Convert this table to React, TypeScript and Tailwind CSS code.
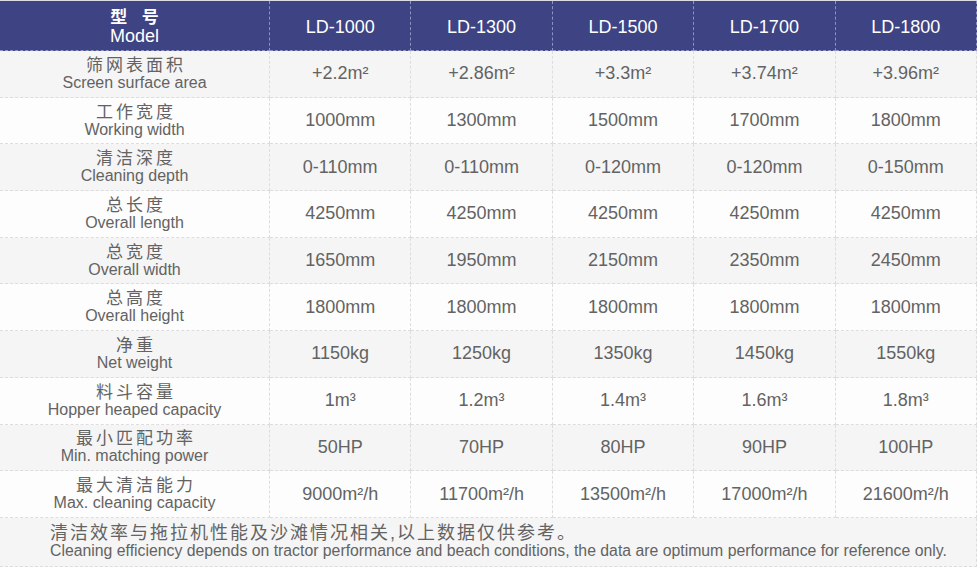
import React from "react";

const models = ["LD-1000", "LD-1300", "LD-1500", "LD-1700", "LD-1800"];

const rows: { zh: string; en: string; values: string[] }[] = [
  { zh: "筛网表面积", en: "Screen surface area", values: ["+2.2m²", "+2.86m²", "+3.3m²", "+3.74m²", "+3.96m²"] },
  { zh: "工作宽度", en: "Working width", values: ["1000mm", "1300mm", "1500mm", "1700mm", "1800mm"] },
  { zh: "清洁深度", en: "Cleaning depth", values: ["0-110mm", "0-110mm", "0-120mm", "0-120mm", "0-150mm"] },
  { zh: "总长度", en: "Overall length", values: ["4250mm", "4250mm", "4250mm", "4250mm", "4250mm"] },
  { zh: "总宽度", en: "Overall width", values: ["1650mm", "1950mm", "2150mm", "2350mm", "2450mm"] },
  { zh: "总高度", en: "Overall height", values: ["1800mm", "1800mm", "1800mm", "1800mm", "1800mm"] },
  { zh: "净重", en: "Net weight", values: ["1150kg", "1250kg", "1350kg", "1450kg", "1550kg"] },
  { zh: "料斗容量", en: "Hopper heaped capacity", values: ["1m³", "1.2m³", "1.4m³", "1.6m³", "1.8m³"] },
  { zh: "最小匹配功率", en: "Min. matching power", values: ["50HP", "70HP", "80HP", "90HP", "100HP"] },
  { zh: "最大清洁能力", en: "Max. cleaning capacity", values: ["9000m²/h", "11700m²/h", "13500m²/h", "17000m²/h", "21600m²/h"] },
];

export default function App() {
  return (
    <main
      className="w-[978px] h-[571px] bg-white overflow-hidden text-[#636363]"
      style={{ fontFamily: '"Liberation Sans", "Noto Sans CJK SC", sans-serif' }}
    >
      <div className="grid grid-cols-[270px_repeat(5,1fr)] w-[977px] border-t border-[#dcdce6]">
        {/* header */}
        <div className="h-[50px] bg-[#3e4483] border-r border-b border-dashed border-[#8f93c4] flex flex-col items-center justify-center text-white leading-[19px] pt-[2px]">
          <span className="text-[17px] font-bold tracking-[5px] pl-[5px]">型 号</span>
          <span className="text-[18px]">Model</span>
        </div>
        {models.map((m) => (
          <div
            key={m}
            className="h-[50px] bg-[#3e4483] border-r border-b border-dashed border-[#8f93c4] flex items-center justify-center text-white text-[18px] pt-[3px]"
          >
            {m}
          </div>
        ))}

        {rows.map((r, i) => {
          const bg = i % 2 === 0 ? "bg-[#f5f5f5]" : "bg-[#fdfdfd]";
          return (
            <React.Fragment key={r.en}>
              <div
                className={`h-[46.7px] ${bg} border-r border-b border-dashed border-[#dddddd] flex flex-col items-center justify-center leading-[17px]`}
              >
                <span className="text-[17px] tracking-[3px] pl-[3px]">{r.zh}</span>
                <span className="text-[16px]">{r.en}</span>
              </div>
              {r.values.map((v, j) => (
                <div
                  key={j}
                  className={`h-[46.7px] ${bg} border-r border-b border-dashed border-[#dddddd] flex items-center justify-center text-[18px]`}
                >
                  {v}
                </div>
              ))}
            </React.Fragment>
          );
        })}
      </div>

      <div className="w-[977px] h-[49px] bg-[#f5f5f5] border-r border-b border-dashed border-[#dddddd] pl-[50px] flex flex-col justify-center leading-[17px]">
        <span className="text-[18px] tracking-[2px]">清洁效率与拖拉机性能及沙滩情况相关,以上数据仅供参考。</span>
        <span className="text-[15.8px]">
          Cleaning efficiency depends on tractor performance and beach conditions, the data are optimum performance for reference only.
        </span>
      </div>
    </main>
  );
}
